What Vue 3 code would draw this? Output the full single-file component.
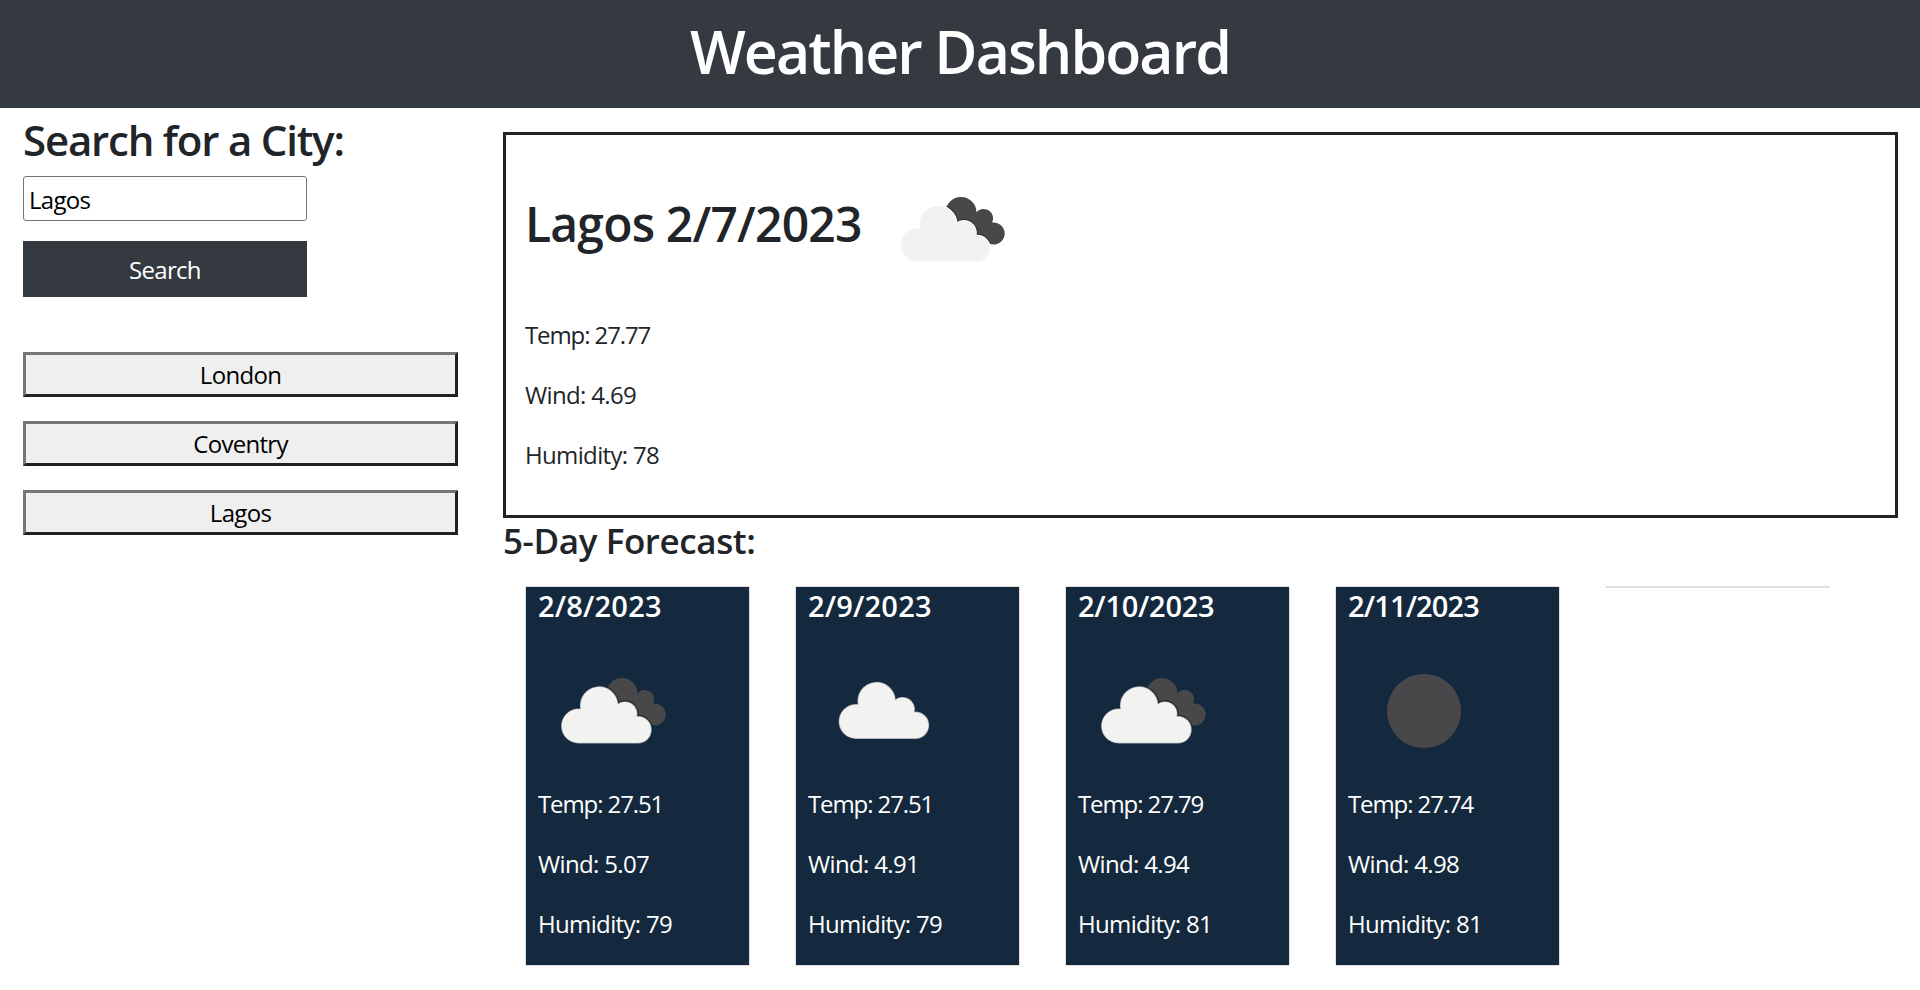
<script setup>
import { ref } from 'vue'

const city = ref('Lagos')
const history = ['London', 'Coventry', 'Lagos']
const forecast = [
  { date: '2/8/2023', fit: 'wide', icon: 'broken', temp: '27.51', wind: '5.07', humidity: 79 },
  { date: '2/9/2023', fit: 'wide', icon: 'cloud', temp: '27.51', wind: '4.91', humidity: 79 },
  { date: '2/10/2023', fit: 'mid', icon: 'broken', temp: '27.79', wind: '4.94', humidity: 81 },
  { date: '2/11/2023', fit: 'tight', icon: 'clear', temp: '27.74', wind: '4.98', humidity: 81 }
]
</script>

<template>
  <svg class="defs" width="0" height="0" aria-hidden="true">
    <defs>
      <path id="front" d="M39.6 106.8A16.8 16.8 0 0 1 39.6 73.2L42 73.3A18.5 18.5 0 1 1 78.6 68.8A11.7 11.7 0 0 1 97.4 80.8L99 80.8A13 13 0 0 1 99 106.8Z" />
      <path id="back" d="M67.5 57.9A15.5 15.5 0 0 1 98.5 57.2A9.5 9.5 0 0 1 114.2 67.6A11 11 0 1 1 109 87.2L86 82Z" />
      <clipPath id="backClip"><use href="#back" /></clipPath>
    </defs>
  </svg>
  <header class="top"><h1>Weather Dashboard</h1></header>
  <div class="layout">
    <aside class="side">
      <h2>Search for a City:</h2>
      <input v-model="city" class="field" type="text" />
      <button class="search">Search</button>
      <div class="history">
        <button v-for="name in history" :key="name" class="past">{{ name }}</button>
      </div>
    </aside>
    <main class="content">
      <section class="today">
        <div class="heading">
          <h2>Lagos 2/7/2023</h2>
          <svg class="icon" viewBox="0 0 150 150">
            <use href="#back" fill="#48484a" />
            <g clip-path="url(#backClip)"><use href="#front" fill="none" stroke="#2c2c2e" stroke-width="4" /></g>
            <use href="#front" fill="#f2f2f0" stroke="#fff" stroke-width="2" />
            <use href="#front" fill="#f2f2f0" />
          </svg>
        </div>
        <p class="temp">Temp: 27.77</p>
        <p>Wind: 4.69</p>
        <p>Humidity: 78</p>
      </section>
      <h3>5-Day Forecast:</h3>
      <section class="cards">
        <article v-for="day in forecast" :key="day.date" class="card">
          <div class="body">
            <h4 :class="day.fit">{{ day.date }}</h4>
            <svg class="icon" viewBox="0 0 150 150">
              <g v-if="day.icon === 'broken'">
                <use href="#back" fill="#48484a" />
                <g clip-path="url(#backClip)"><use href="#front" fill="none" stroke="#2c2c2e" stroke-width="4" /></g>
                <use href="#front" fill="#f2f2f0" stroke="#fff" stroke-opacity=".6" stroke-width="1.4" />
              </g>
              <use v-else-if="day.icon === 'cloud'" href="#front" transform="translate(7.5 -4.5)" fill="#f2f2f0" stroke="#f2f2f0" stroke-opacity=".6" stroke-width="1.4" />
              <circle v-else cx="75" cy="75" r="37" fill="#48484a" />
            </svg>
            <p class="temp">Temp: {{ day.temp }}</p>
            <p>Wind: {{ day.wind }}</p>
            <p>Humidity: {{ day.humidity }}</p>
          </div>
        </article>
        <article class="card"></article>
      </section>
    </main>
  </div>
</template>

<style>
body {
  background: #fff;
}
</style>

<style scoped>
* {
  box-sizing: border-box;
  margin: 0;
}
.defs {
  position: absolute;
}
.top,
.layout {
  font-family: "Open Sans", "Noto Sans", sans-serif;
  font-size: 24px;
  line-height: 36px;
  color: #212529;
}
h1, h2, h3, h4 {
  font-weight: 600;
  white-space: nowrap;
}
.top {
  height: 108px;
  background: #343a40;
  color: #fff;
  text-align: center;
}
.top h1 {
  font-size: 59px;
  line-height: 102px;
  letter-spacing: -1.9px;
}
.layout {
  display: flex;
  height: 882px;
}
.side {
  width: 503px;
  padding: 6px 45px 0 23px;
  display: flex;
  flex-direction: column;
}
.side h2 {
  font-size: 42px;
  line-height: 51px;
  margin-bottom: 11px;
  letter-spacing: -1.2px;
}
.field {
  width: 284px;
  height: 45px;
  padding: 3px 5px 1px;
  border: 1px solid #767676;
  border-radius: 3px;
  background: #fff;
  color: #000;
  font: inherit;
  letter-spacing: -0.7px;
}
.search {
  width: 284px;
  height: 56px;
  margin-top: 20px;
  padding: 2px 0 0;
  border: 0;
  background: #343a40;
  color: #fff;
  font: inherit;
  letter-spacing: -0.7px;
}
.history {
  display: flex;
  flex-direction: column;
  gap: 24px;
  margin-top: 55px;
}
.past {
  height: 45px;
  padding: 0;
  border: 3px solid;
  border-color: #767676 #212121 #212121 #767676;
  background: #efefef;
  color: #000;
  font: inherit;
  letter-spacing: -0.7px;
}
.content {
  width: 1395px;
  padding-top: 24px;
}
.today {
  height: 386px;
  padding: 20px 19px;
  border: 3px solid #212529;
}
.heading {
  display: flex;
  align-items: center;
  height: 150px;
  margin-bottom: 12px;
}
.heading h2 {
  width: 353px;
  font-size: 48px;
  line-height: 60px;
  padding-bottom: 13px;
  letter-spacing: -0.8px;
}
.icon {
  display: block;
  width: 150px;
  height: 150px;
  flex: none;
}
p {
  letter-spacing: -0.65px;
  white-space: nowrap;
}
p + p {
  margin-top: 24px;
}
.temp {
  letter-spacing: -1.1px;
}
h3 {
  font-size: 35px;
  line-height: 46px;
  letter-spacing: -0.4px;
}
.cards {
  display: flex;
  align-items: flex-start;
  gap: 45px;
  margin-top: 22px;
  padding-left: 22px;
}
.card {
  width: 225px;
  border: 1px solid #dfdfdf;
  border-radius: 2px;
}
.body {
  height: 378px;
  padding-left: 12px;
  background: #14293d;
  color: #fff;
}
.body h4 {
  font-size: 29px;
  line-height: 38px;
  margin-bottom: 11px;
}
.body .wide {
  letter-spacing: 0.2px;
}
.body .mid {
  letter-spacing: -0.25px;
}
.body .tight {
  letter-spacing: -0.85px;
}
.body .icon {
  margin-left: 1px;
}
</style>
